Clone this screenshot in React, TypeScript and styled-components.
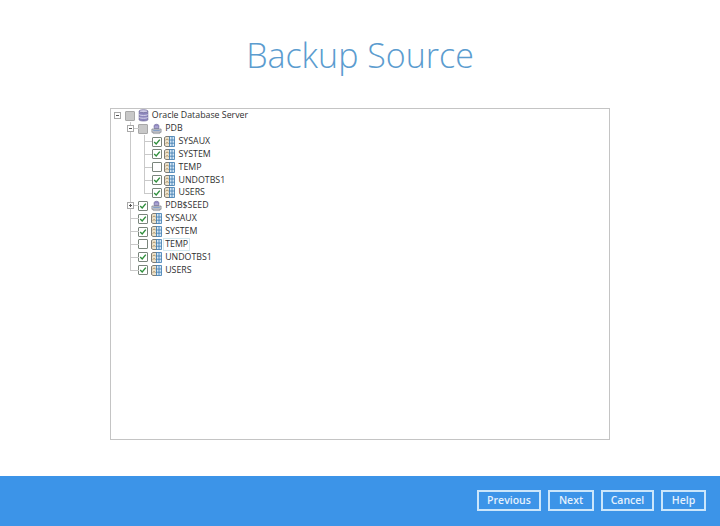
import React, { FunctionComponent } from "react";
import styled, { createGlobalStyle } from "styled-components";

const GlobalStyle = createGlobalStyle`
  html, body {
    margin: 0;
    padding: 0;
    height: 100%;
    background: #ffffff;
    font-family: "Open Sans", "Liberation Sans", sans-serif;
  }
  #root {
    height: 100%;
  }
`;

const StyledPage = styled.div`
  display: flex;
  flex-direction: column;
  height: 526px;
  width: 720px;
  overflow: hidden;
`;

const StyledMain = styled.main`
  display: flex;
  flex: 1;
  flex-direction: column;
  align-items: center;
`;

const StyledTitle = styled.h1`
  margin: 30px 0 28px;
  color: #5b9ccf;
  font-size: 34px;
  font-weight: 300;
  line-height: 50px;
`;

const StyledTreePanel = styled.div`
  box-sizing: border-box;
  width: 500px;
  height: 332px;
  padding: 0.5px 0 0;
  border: 1px solid #c4c4c4;
`;

const StyledRow = styled.div`
  display: flex;
  align-items: stretch;
  height: 12.85px;
`;

type GuideKind = "blank" | "pipe" | "tee" | "end";

const StyledGuide = styled.span<{ $kind: GuideKind }>`
  position: relative;
  flex: none;
  width: 13.35px;

  &::before {
    content: "";
    display: ${({ $kind }) => ($kind === "blank" ? "none" : "block")};
    position: absolute;
    top: 0;
    bottom: ${({ $kind }) => ($kind === "end" ? "50%" : "0")};
    left: 6px;
    width: 1px;
    background: #c9c9c9;
  }

  &::after {
    content: "";
    display: ${({ $kind }) => ($kind === "tee" || $kind === "end" ? "block" : "none")};
    position: absolute;
    top: 6px;
    left: 6px;
    right: -1px;
    height: 1px;
    background: #c9c9c9;
  }
`;

const StyledExpanderCell = styled(StyledGuide)`
  display: flex;
  align-items: center;
  justify-content: center;
`;

const StyledExpander = styled.span`
  position: relative;
  z-index: 1;
  box-sizing: border-box;
  display: block;
  width: 7px;
  height: 7px;
  margin-left: -1px;
  background: #ffffff;
  border: 1px solid #a9a9a9;
`;

const StyledExpanderMark = styled.span<{ $open: boolean }>`
  position: absolute;
  top: 2px;
  left: 1px;
  width: 3px;
  height: 1px;
  background: #555555;

  &::after {
    content: "";
    display: ${({ $open }) => ($open ? "none" : "block")};
    position: absolute;
    top: -1px;
    left: 1px;
    width: 1px;
    height: 3px;
    background: #555555;
  }
`;

const StyledCheckCell = styled.span`
  display: flex;
  flex: none;
  align-items: center;
  justify-content: flex-start;
  width: 12px;
  margin-left: 0.7px;
  margin-right: 0.65px;
`;

type CheckState = "checked" | "unchecked" | "partial";

const StyledCheckBox = styled.span<{ $state: CheckState }>`
  box-sizing: border-box;
  display: flex;
  align-items: center;
  justify-content: center;
  width: 10px;
  height: 10px;
  background: ${({ $state }) => ($state === "partial" ? "#c8c8c8" : "#ffffff")};
  border: 1px solid ${({ $state }) => ($state === "partial" ? "#a8a8a8" : "#7a857c")};
  border-radius: 1px;
`;

const StyledIconCell = styled.span`
  display: flex;
  flex: none;
  align-items: center;
  justify-content: center;
  width: 11px;
`;

const StyledLabel = styled.span<{ $focused?: boolean }>`
  margin-left: 2.2px;
  padding: 0 1px;
  color: #2f2f2f;
  font-size: 8.8px;
  line-height: 11px;
  align-self: center;
  outline: ${({ $focused }) => ($focused ? "1px solid #d3e8ee" : "none")};
`;

const StyledFooter = styled.footer`
  display: flex;
  flex: none;
  align-items: flex-start;
  justify-content: flex-end;
  gap: 7px;
  box-sizing: border-box;
  height: 50px;
  padding: 14px 14px 0 0;
  background: #3c94e8;
`;

const StyledFooterButton = styled.button<{ $width: number }>`
  box-sizing: border-box;
  width: ${({ $width }) => $width}px;
  height: 21px;
  padding: 0;
  background: transparent;
  border: 2px solid #cbe6fb;
  color: #e4f1fd;
  font-family: inherit;
  font-size: 10.5px;
  font-weight: 600;
  line-height: 17px;
`;

const CheckMark: FunctionComponent = () => (
  <svg width="8" height="8" viewBox="0 0 8 8">
    <path d="M1.2 4 L3.2 6 L6.8 1.6" fill="none" stroke="#2f8f3c" strokeWidth="1.4" />
  </svg>
);

const DatabaseIcon: FunctionComponent = () => (
  <svg width="11" height="13" viewBox="0 0 10 12">
    <path d="M1 2 V10 C1 11.4 9 11.4 9 10 V2 Z" fill="#8d86bd" stroke="#5f5a8c" strokeWidth="0.6" />
    <ellipse cx="5" cy="2" rx="4" ry="1.4" fill="#cfcbe6" stroke="#5f5a8c" strokeWidth="0.6" />
    <path d="M1 5 C1 6.2 9 6.2 9 5 M1 7.6 C1 8.8 9 8.8 9 7.6" fill="none" stroke="#e6e4f3" strokeWidth="0.8" />
  </svg>
);

const PluggableIcon: FunctionComponent = () => (
  <svg width="11" height="12" viewBox="0 0 12 12">
    <ellipse cx="6" cy="2.6" rx="2.6" ry="1.8" fill="#8f86c2" stroke="#5f5990" strokeWidth="0.6" />
    <path d="M3.4 2.6 V5.5 H8.6 V2.6" fill="#a9a3d0" stroke="#5f5990" strokeWidth="0.6" />
    <path d="M1 6 H11 V9.6 H1 Z" fill="#cfd2d9" stroke="#6f727a" strokeWidth="0.7" />
    <path d="M2.5 9.6 H9.5 V11 H2.5 Z" fill="#eeeeee" stroke="#7f828a" strokeWidth="0.6" />
    <path d="M2.4 7.6 H9.6" stroke="#6f93c4" strokeWidth="0.9" />
  </svg>
);

const TablespaceIcon: FunctionComponent = () => (
  <svg width="11" height="11" viewBox="0 0 11 11">
    <path d="M0.5 1.5 L2 0.5 H6 V10.5 H2 L0.5 9.5 Z" fill="#ece2cb" stroke="#5f5f5a" strokeWidth="0.8" />
    <path d="M1.6 4 C2.6 3 4 3 4.6 4 M1.6 7.5 C2.6 6.5 4 6.5 4.6 7.5" fill="none" stroke="#a8895a" strokeWidth="1" />
    <path d="M5.5 0.5 H10.5 V10.5 H5.5 Z" fill="#d5e6f5" stroke="#3a78ae" strokeWidth="0.8" />
    <path d="M5.5 4 H10.5 M5.5 7.2 H10.5 M8 0.5 V10.5" stroke="#3a78ae" strokeWidth="0.8" />
  </svg>
);

type TreeIcon = "database" | "pluggable" | "tablespace";

interface TreeNode {
  label: string;
  guides: GuideKind[];
  expander?: "open" | "closed";
  check: CheckState;
  icon: TreeIcon;
  focused?: boolean;
}

const TREE_NODES: TreeNode[] = [
  { label: "Oracle Database Server", guides: [], expander: "open", check: "partial", icon: "database" },
  { label: "PDB", guides: ["blank"], expander: "open", check: "partial", icon: "pluggable" },
  { label: "SYSAUX", guides: ["blank", "pipe", "tee"], check: "checked", icon: "tablespace" },
  { label: "SYSTEM", guides: ["blank", "pipe", "tee"], check: "checked", icon: "tablespace" },
  { label: "TEMP", guides: ["blank", "pipe", "tee"], check: "unchecked", icon: "tablespace" },
  { label: "UNDOTBS1", guides: ["blank", "pipe", "tee"], check: "checked", icon: "tablespace" },
  { label: "USERS", guides: ["blank", "pipe", "end"], check: "checked", icon: "tablespace" },
  { label: "PDB$SEED", guides: ["blank"], expander: "closed", check: "checked", icon: "pluggable" },
  { label: "SYSAUX", guides: ["blank", "tee"], check: "checked", icon: "tablespace" },
  { label: "SYSTEM", guides: ["blank", "tee"], check: "checked", icon: "tablespace" },
  { label: "TEMP", guides: ["blank", "tee"], check: "unchecked", icon: "tablespace", focused: true },
  { label: "UNDOTBS1", guides: ["blank", "tee"], check: "checked", icon: "tablespace" },
  { label: "USERS", guides: ["blank", "end"], check: "checked", icon: "tablespace" },
];

const renderIcon = (icon: TreeIcon) => {
  if (icon === "database") return <DatabaseIcon />;
  if (icon === "pluggable") return <PluggableIcon />;
  return <TablespaceIcon />;
};

const FOOTER_BUTTONS = [
  { label: "Previous", width: 64 },
  { label: "Next", width: 46 },
  { label: "Cancel", width: 53 },
  { label: "Help", width: 45 },
];

export default function App() {
  return (
    <>
      <GlobalStyle />
      <StyledPage>
        <StyledMain>
          <StyledTitle>Backup Source</StyledTitle>
          <StyledTreePanel>
            {TREE_NODES.map((node, index) => (
              <StyledRow key={`${node.label}-${index}`}>
                {node.guides.map((kind, guideIndex) => (
                  <StyledGuide $kind={kind} key={guideIndex} />
                ))}
                {node.expander && (
                  <StyledExpanderCell $kind={node.guides.length ? "tee" : "blank"}>
                    <StyledExpander>
                      <StyledExpanderMark $open={node.expander === "open"} />
                    </StyledExpander>
                  </StyledExpanderCell>
                )}
                <StyledCheckCell>
                  <StyledCheckBox $state={node.check}>{node.check === "checked" && <CheckMark />}</StyledCheckBox>
                </StyledCheckCell>
                <StyledIconCell>{renderIcon(node.icon)}</StyledIconCell>
                <StyledLabel $focused={node.focused}>{node.label}</StyledLabel>
              </StyledRow>
            ))}
          </StyledTreePanel>
        </StyledMain>
        <StyledFooter>
          {FOOTER_BUTTONS.map((button) => (
            <StyledFooterButton $width={button.width} key={button.label}>
              {button.label}
            </StyledFooterButton>
          ))}
        </StyledFooter>
      </StyledPage>
    </>
  );
}
